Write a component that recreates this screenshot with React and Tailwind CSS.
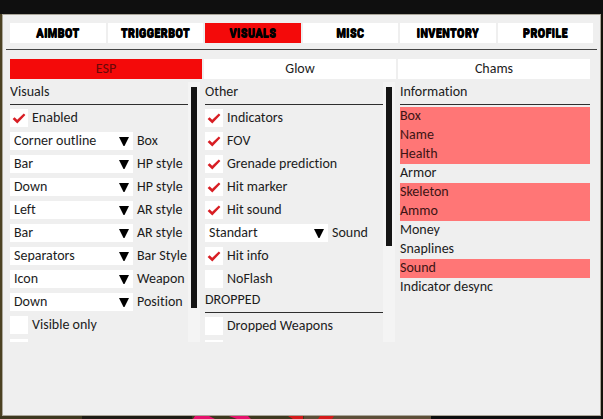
import React, { useState } from "react";

const mainTabs = ["AIMBOT", "TRIGGERBOT", "VISUALS", "MISC", "INVENTORY", "PROFILE"];
const subTabs = ["ESP", "Glow", "Chams"];
const information = [
  ["Box", true],
  ["Name", true],
  ["Health", true],
  ["Armor", false],
  ["Skeleton", true],
  ["Ammo", true],
  ["Money", false],
  ["Snaplines", false],
  ["Sound", true],
  ["Indicator desync", false],
];

function Heading({ children }) {
  return (
    <h2 className="-mb-px h-5 shrink-0 border-b border-[#2e2e2e] leading-[14px] whitespace-nowrap">
      {children}
    </h2>
  );
}

function Check({ label, name, checked = false }) {
  const [on, setOn] = useState(checked);
  return (
    <label className="relative flex h-[18px] shrink-0 items-start gap-1 leading-[17px] whitespace-nowrap">
      <input
        type="checkbox"
        aria-label={name}
        checked={on}
        onChange={() => setOn(!on)}
        className="size-[18px] shrink-0 appearance-none bg-white"
      />
      {on && (
        <svg viewBox="0 0 18 18" className="pointer-events-none absolute top-0 left-0 size-[18px]">
          <path d="M2.6 10 L4.6 8.3 L7.2 10.7 L13.8 4.6 L15.4 6 L7.3 14.4 Z" fill="#d81e24" />
        </svg>
      )}
      {label}
    </label>
  );
}

function Combo({ value, label }) {
  return (
    <label className="flex h-[18px] shrink-0 items-start gap-1 leading-[17px] whitespace-nowrap">
      <span className="relative w-[123px] shrink-0">
        <select className="block h-[18px] w-full appearance-none bg-white pr-5 pl-1 leading-[18px]">
          <option>{value}</option>
        </select>
        <svg viewBox="0 0 10 9" className="pointer-events-none absolute top-[5px] right-1 h-[9px] w-2.5">
          <path d="M0 0H10L5.5 9H4.5Z" fill="#000" />
        </svg>
      </span>
      {label}
    </label>
  );
}

function ScrollPane({ thumb, children }) {
  return (
    <section className="flex h-[260px] overflow-hidden">
      <div className="flex min-w-0 flex-1 flex-col gap-[5px] overflow-hidden pt-[3px]">{children}</div>
      <div className="w-3 shrink-0 bg-[#f4f4f4] px-[3px] pt-[5px]">
        <div className={`bg-[#151515] ${thumb}`} />
      </div>
    </section>
  );
}

export default function App() {
  const [tab, setTab] = useState("VISUALS");
  const [sub, setSub] = useState("ESP");
  return (
    <div className="flex min-h-screen flex-col bg-linear-to-r from-[#4b4122] to-[#14110a] font-['Carlito','Lato',sans-serif] text-[14px] text-[#1c1c1c] [font-variant-ligatures:none]">
      <div className="h-3.5 bg-[#0f0f0f]" />
      <main className="mx-0.5 flex-1 border border-[#aaa69a] bg-[#efefef] px-[3px] pt-2">
        <nav className="grid grid-cols-6 gap-0.5 border-b border-[#444] px-1 pb-1.5">
          {mainTabs.map((t) => (
            <button
              key={t}
              onClick={() => setTab(t)}
              className={`h-5 font-['Impact','Roboto_Condensed','Carlito','Lato',sans-serif] text-[13px] leading-5 font-black text-black [text-shadow:0_1px_0_#000] ${
                t === tab ? "bg-[#f40a0a]" : "bg-white"
              }`}
            >
              {t}
            </button>
          ))}
        </nav>
        <div className="pt-[9px] pr-[7px] pl-1">
          <div className="grid grid-cols-3 gap-0.5">
            {subTabs.map((t) => (
              <button
                key={t}
                onClick={() => setSub(t)}
                className={`h-5 leading-5 ${t === sub ? "bg-[#f40a0a] text-[#6a0808]" : "bg-white"}`}
              >
                {t}
              </button>
            ))}
          </div>
          <div className="mt-[3px] grid grid-cols-3 gap-[5px]">
            <ScrollPane thumb="h-[221px]">
              <Heading>Visuals</Heading>
              <Check label="Enabled" checked />
              <Combo value="Corner outline" label="Box" />
              <Combo value="Bar" label="HP style" />
              <Combo value="Down" label="HP style" />
              <Combo value="Left" label="AR style" />
              <Combo value="Bar" label="AR style" />
              <Combo value="Separators" label="Bar Style" />
              <Combo value="Icon" label="Weapon" />
              <Combo value="Down" label="Position" />
              <Check label="Visible only" />
              <Check name="Visuals option" />
            </ScrollPane>
            <ScrollPane thumb="h-[159px]">
              <Heading>Other</Heading>
              <Check label="Indicators" checked />
              <Check label="FOV" checked />
              <Check label="Grenade prediction" checked />
              <Check label="Hit marker" checked />
              <Check label="Hit sound" checked />
              <Combo value="Standart" label="Sound" />
              <Check label="Hit info" checked />
              <Check label="NoFlash" />
              <Heading>DROPPED</Heading>
              <Check label="Dropped Weapons" />
              <Check name="Dropped option" />
            </ScrollPane>
            <section className="flex flex-col gap-[3px] pt-[3px]">
              <Heading>Information</Heading>
              <ul>
                {information.map(([name, on]) => (
                  <li key={name} className={`h-[19px] leading-[17px] ${on ? "bg-[#ff7676] text-[#3c1414]" : ""}`}>
                    {name}
                  </li>
                ))}
              </ul>
            </section>
          </div>
        </div>
      </main>
      <svg viewBox="0 0 603 3" preserveAspectRatio="none" className="h-[3px] w-full">
        <rect width="603" height="3" fill="#3d381f" />
        <rect x="82" width="110" height="3" fill="#1d1b14" />
        <path d="M195 0h14l6 3h-22z M229 0h19l3 3h-14z" fill="#e5116c" />
        <rect x="304" width="127" height="3" fill="#5c4e38" />
        <path d="M288 0h15v3h-10z M320 0h14l-2 3h-14z" fill="#d41a1a" />
        <rect x="431" width="172" height="3" fill="#0b0d0d" />
      </svg>
    </div>
  );
}
